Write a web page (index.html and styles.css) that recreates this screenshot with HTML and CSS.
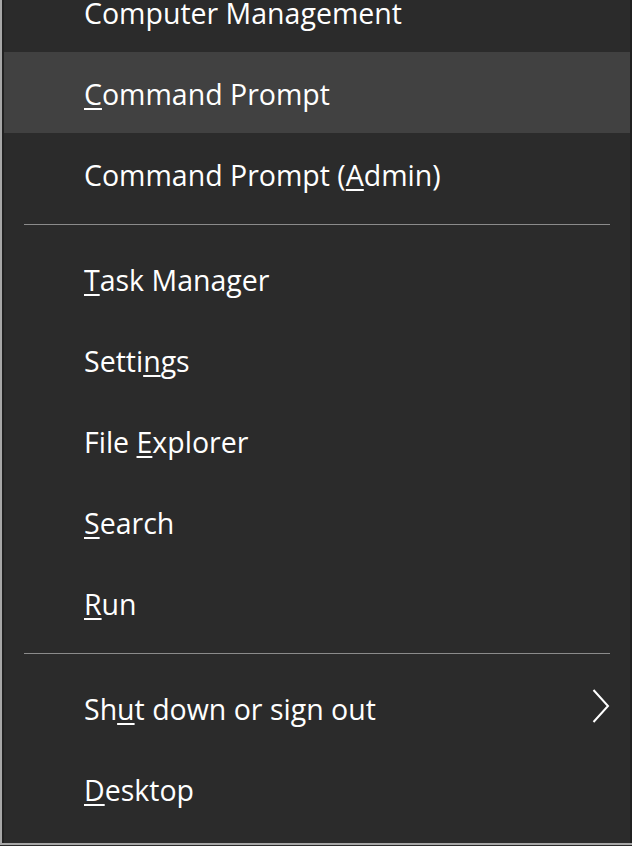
FILE: index.html
```html
<!DOCTYPE html>
<html lang="en">
<head>
  <meta charset="UTF-8">
  <meta name="viewport" content="width=device-width, initial-scale=1">
  <title>Quick Link menu</title>
  <link rel="stylesheet" href="styles.css">
</head>
<body>
  <div class="frame">
    <ul class="menu">
      <li class="item"><span>Computer Mana<u>g</u>ement</span></li>
      <li class="item active"><span><u>C</u>ommand Prompt</span></li>
      <li class="item"><span>Command Prompt (<u>A</u>dmin)</span></li>
      <li class="sep"></li>
      <li class="item"><span><u>T</u>ask Manager</span></li>
      <li class="item"><span>Setti<u>n</u>gs</span></li>
      <li class="item"><span>File <u>E</u>xplorer</span></li>
      <li class="item"><span><u>S</u>earch</span></li>
      <li class="item"><span><u>R</u>un</span></li>
      <li class="sep"></li>
      <li class="item sub">
        <span>Sh<u>u</u>t down or sign out</span>
        <svg class="chevron" width="18" height="34" viewBox="0 0 18 34">
          <polyline points="1.5,1 16,17 1.5,33" fill="none" stroke="#fff" stroke-width="2"/>
        </svg>
      </li>
      <li class="item"><span><u>D</u>esktop</span></li>
    </ul>
  </div>
</body>
</html>
```

FILE: styles.css
```css
html, body {
  margin: 0;
  height: 100%;
  overflow: hidden;
  background: #2b2b2b;
}

body {
  font-family: "Open Sans", "Noto Sans", sans-serif;
  color: #fff;
}

/* outer edge of the flyout, the top is scrolled off */
.frame {
  margin-top: -29px;
  height: 874px;
  box-sizing: border-box;
  border-left: 2px solid #a7a7a7;
  border-bottom: 2px solid #a7a7a7;
}

.menu {
  list-style: none;
  margin: 0;
  padding: 0 0 14px 0;
  border-left: 2px solid #202020;
  border-right: 2px solid #202020;
  background: #2b2b2b;
  box-sizing: border-box;
  height: 100%;
}

.item {
  height: 81px;
  display: flex;
  align-items: center;
  padding-left: 80px;
  padding-top: 2px;
  font-size: 28.5px;
  box-sizing: border-box;
  white-space: nowrap;
}

.item u {
  text-decoration-thickness: 2px;
  text-underline-offset: 3px;
}

.item.active {
  background: #414141;
}

.item.sub {
  justify-content: space-between;
  padding-right: 20px;
}

.chevron {
  display: block;
  margin-top: -6px;
}

.sep {
  height: 1px;
  margin: 10px 20px 13px 20px;
  background: #8b8b8b;
}
```
